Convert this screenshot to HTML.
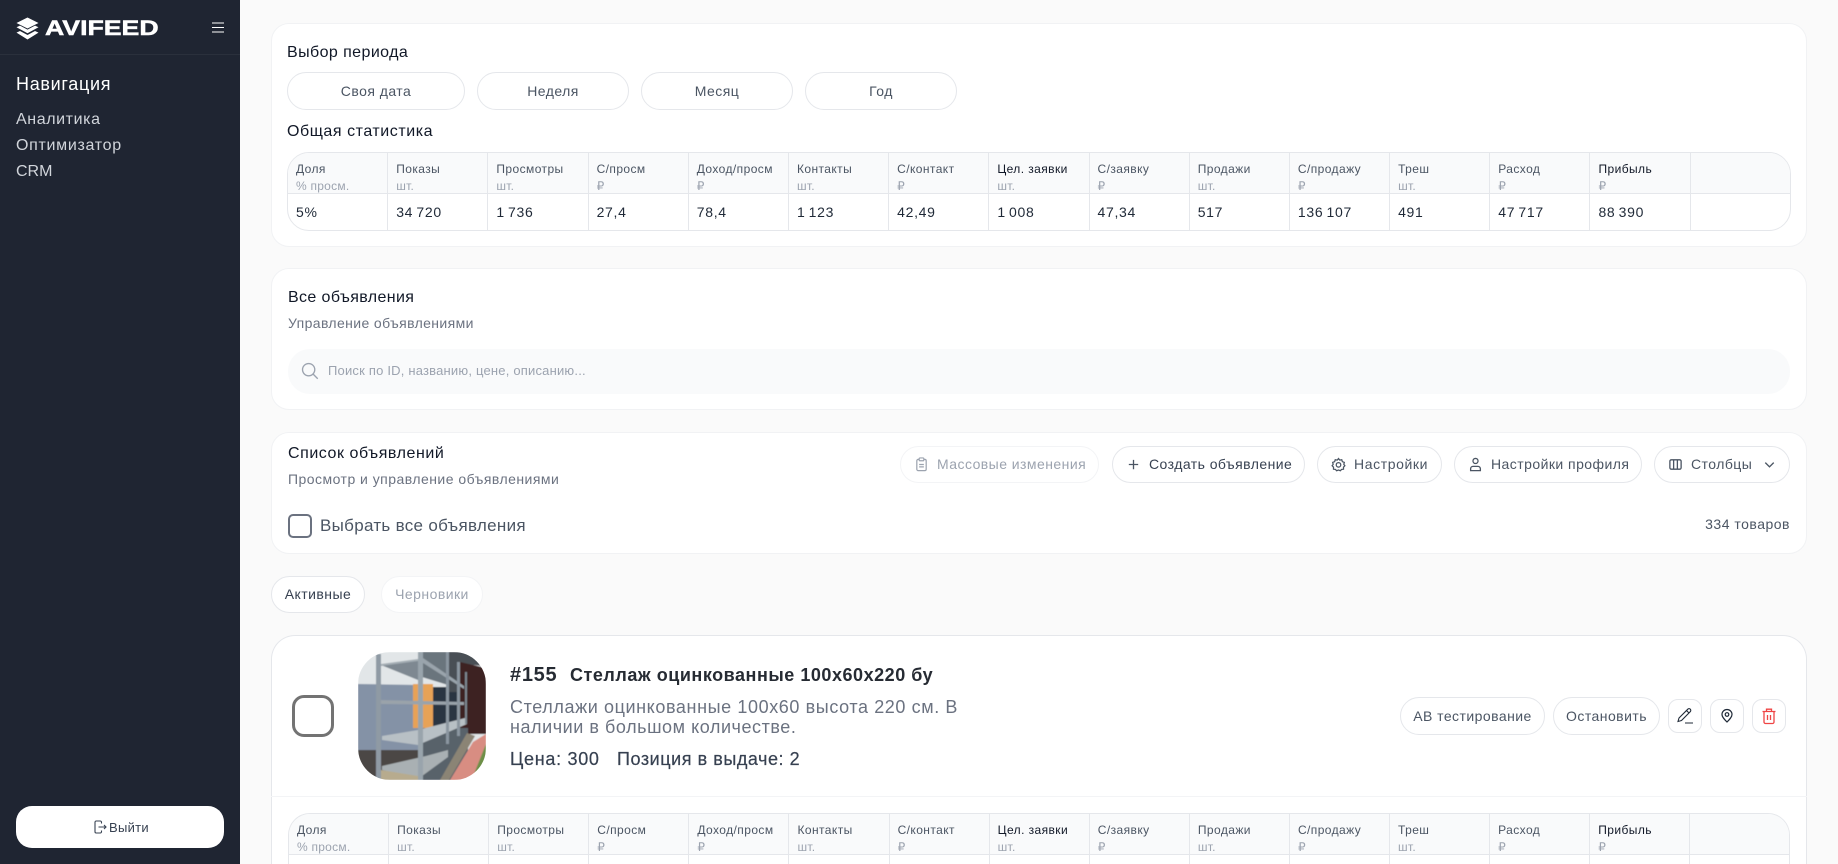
<!DOCTYPE html>
<html lang="ru"><head><meta charset="utf-8"><title>AVIFEED</title>
<style>
*{box-sizing:border-box}
html,body{margin:0;padding:0;width:1838px;height:864px;overflow:hidden;background:#fafafa;font-family:"Liberation Sans",sans-serif;color:#111827}
#w{position:relative;width:1838px;height:864px;overflow:hidden;background:#fafafa}
.a{position:absolute;white-space:nowrap}
.side{position:absolute;left:0;top:0;width:240px;height:864px;background:#1f2532}
.hr{position:absolute;left:0;top:54px;width:240px;height:1px;background:#2a303c}
.card{position:absolute;background:#fff;border:1px solid #f1f2f4;border-radius:18px}
.btn{position:absolute;height:38px;line-height:36px;border:1px solid #e5e7eb;border-radius:19px;background:#fff;color:#4b5563;font-size:14px;letter-spacing:.45px;text-align:center;white-space:nowrap}
.s{height:37px;line-height:35px}
.btn svg{position:absolute;top:10px}
.btn span{position:absolute;top:0;line-height:35px}
.ib{position:absolute;top:699px;width:34px;height:34px;border:1px solid #e5e7eb;border-radius:10px;background:#fff}
.ib svg{position:absolute;left:7px;top:7px}
.tb{position:absolute;border:1px solid #e5e7eb;border-radius:22px;overflow:hidden;background:#fff;display:grid;align-content:start}
.h{height:41px;background:#f9fafb;border-right:1px solid #e5e7eb;border-bottom:1px solid #e5e7eb;padding:8px 0 0 8px;font-size:12px;line-height:17px;color:#4b5563;letter-spacing:.42px;white-space:nowrap}
.h i{display:block;font-style:normal;color:#9ca3af;letter-spacing:.25px}
.h b{font-weight:400;color:#111827}
.v{height:37px;border-right:1px solid #e5e7eb;padding-left:8px;font-size:14px;line-height:36px;color:#1f2937;letter-spacing:.7px;word-spacing:-1.4px;white-space:nowrap}
.e{height:10px}
.last{border-right:0}
</style></head><body><div id="w">
<div class="side">
<svg class="a" style="left:16px;top:17px" width="23" height="23" viewBox="0 0 23 23"><path d="M11.5 0.5 22.5 6 11.5 11.5 .5 6Z" fill="#fff"/><path d="M.5 10.2 4 8.6 11.5 12.6 19 8.6 22.5 10.2 11.5 16.3Z" fill="#fff"/><path d="M.5 15.6 4 14 11.5 18 19 14 22.5 15.6 11.5 22.5Z" fill="#fff"/></svg>
<div class="a" style="left:45px;top:16px;font-size:21px;line-height:25px;font-weight:700;color:#fff;transform-origin:0 50%;transform:scaleX(1.27);-webkit-text-stroke:.5px #fff">AVIFEED</div>
<svg class="a" style="left:212px;top:22px" width="12" height="11" viewBox="0 0 12 11"><path d="M0 1H12M0 5.5H12M0 10H12" stroke="#fff" stroke-width="1"/></svg>
<div class="hr"></div>
<div class="a" style="left:16px;top:73px;font-size:18px;line-height:22px;color:#fff;letter-spacing:.7px">Навигация</div>
<div class="a" style="left:16px;top:109px;font-size:16px;line-height:22px;color:#d1d5db;letter-spacing:.6px">Аналитика</div>
<div class="a" style="left:16px;top:135px;font-size:16px;line-height:22px;color:#d1d5db;letter-spacing:.7px">Оптимизатор</div>
<div class="a" style="left:16px;top:161px;font-size:16px;line-height:22px;color:#d1d5db;letter-spacing:0">CRM</div>
<div class="a" style="left:16px;top:806px;width:208px;height:42px;background:#fff;border-radius:16px"></div>
<svg class="a" style="left:94px;top:820px" width="13" height="14" viewBox="0 0 13 14" fill="none" stroke="#374151" stroke-width="1.1"><path d="M7.5 3.5V2.2A1.2 1.2 0 0 0 6.3 1H2.2A1.2 1.2 0 0 0 1 2.2V11.8A1.2 1.2 0 0 0 2.2 13H6.3A1.2 1.2 0 0 0 7.5 11.8V10.5"/><path d="M4.5 7H12M10 5 12 7 10 9"/></svg>
<div class="a" style="left:109px;top:820px;font-size:13px;line-height:16px;color:#374151;letter-spacing:.3px">Выйти</div>
</div>

<div class="card" style="left:271px;top:23px;width:1536px;height:224px"></div>
<div class="a" style="left:287px;top:43px;font-size:16px;line-height:20px;color:#111827;letter-spacing:.42px">Выбор периода</div>
<div class="btn" style="left:287px;top:72px;width:178px">Своя дата</div>
<div class="btn" style="left:477px;top:72px;width:152px">Неделя</div>
<div class="btn" style="left:641px;top:72px;width:152px">Месяц</div>
<div class="btn" style="left:805px;top:72px;width:152px">Год</div>
<div class="a" style="left:287px;top:122px;font-size:16px;line-height:20px;color:#111827;letter-spacing:.55px">Общая статистика</div>

<div class="tb" style="left:287px;top:152px;height:79px;width:1504px;grid-template-columns:repeat(14,100.2px) 1fr">
<div class="h">Доля<i>% просм.</i></div><div class="h">Показы<i>шт.</i></div><div class="h">Просмотры<i>шт.</i></div><div class="h">С/просм<i>₽</i></div><div class="h">Доход/просм<i>₽</i></div><div class="h">Контакты<i>шт.</i></div><div class="h">С/контакт<i>₽</i></div><div class="h"><b>Цел. заявки</b><i>шт.</i></div><div class="h">С/заявку<i>₽</i></div><div class="h">Продажи<i>шт.</i></div><div class="h">С/продажу<i>₽</i></div><div class="h">Треш<i>шт.</i></div><div class="h">Расход<i>₽</i></div><div class="h"><b>Прибыль</b><i>₽</i></div><div class="h last"></div>
<div class="v">5%</div><div class="v">34 720</div><div class="v">1 736</div><div class="v">27,4</div><div class="v">78,4</div><div class="v">1 123</div><div class="v">42,49</div><div class="v">1 008</div><div class="v">47,34</div><div class="v">517</div><div class="v">136 107</div><div class="v">491</div><div class="v">47 717</div><div class="v">88 390</div><div class="v last"></div>
</div>

<div class="card" style="left:271px;top:268px;width:1536px;height:142px"></div>
<div class="a" style="left:288px;top:288px;font-size:16px;line-height:20px;color:#111827;letter-spacing:.38px">Все объявления</div>
<div class="a" style="left:288px;top:314px;font-size:14px;line-height:18px;color:#6b7280;letter-spacing:.38px">Управление объявлениями</div>
<div class="a" style="left:288px;top:349px;width:1502px;height:45px;background:#f9fafb;border-radius:22px"></div>
<svg class="a" style="left:301px;top:362px" width="18" height="18" viewBox="0 0 20 20" fill="none" stroke="#9ca3af" stroke-width="1.5"><circle cx="8.5" cy="8.5" r="6.8"/><path d="M13.5 13.5 18.6 18.6"/></svg>
<div class="a" style="left:328px;top:362px;font-size:13px;line-height:18px;color:#9ca3af;letter-spacing:.2px">Поиск по ID, названию, цене, описанию...</div>

<div class="card" style="left:271px;top:432px;width:1536px;height:122px"></div>
<div class="a" style="left:288px;top:444px;font-size:16px;line-height:20px;color:#111827;letter-spacing:.55px">Список объявлений</div>
<div class="a" style="left:288px;top:470px;font-size:14px;line-height:18px;color:#6b7280;letter-spacing:.47px">Просмотр и управление объявлениями</div>
<div class="a" style="left:288px;top:514px;width:24px;height:24px;border:2px solid #6b7280;border-radius:5px;background:#fff"></div>
<div class="a" style="left:320px;top:516px;font-size:17px;line-height:20px;color:#4b5563;letter-spacing:.3px">Выбрать все объявления</div>

<div class="btn s" style="left:900px;top:446px;width:199px;border-color:#f3f4f6;color:#9ca3af"><svg style="left:13px" width="15" height="15" viewBox="0 0 16 16" fill="none" stroke="#9ca3af" stroke-width="1.3"><rect x="3" y="2.5" width="10" height="12" rx="1.5"/><rect x="5.5" y="1" width="5" height="3" rx="1" fill="#fff"/><path d="M5.5 8H10.5M5.5 10.5H10.5"/></svg><span style="left:36px">Массовые изменения</span></div>
<div class="btn s" style="left:1112px;top:446px;width:193px;color:#374151"><svg style="left:13px" width="15" height="15" viewBox="0 0 16 16" fill="none" stroke="#4b5563" stroke-width="1.4"><path d="M8 3V13M3 8H13"/></svg><span style="left:36px">Создать объявление</span></div>
<div class="btn s" style="left:1317px;top:446px;width:125px"><svg style="left:13px" width="15" height="15" viewBox="0 0 24 24" fill="none" stroke="#4b5563" stroke-width="2"><path d="M12 2.5 14 5 17.2 4.4 18.2 7.5 21.3 8.6 20.5 11.8 22.2 14 20 16.2 20 19.5 16.8 19.9 15 22 12 20.8 9 22 7.2 19.9 4 19.5 4 16.2 1.8 14 3.5 11.8 2.7 8.6 5.8 7.5 6.8 4.4 10 5Z"/><circle cx="12" cy="12.5" r="3.6"/></svg><span style="left:36px;letter-spacing:.6px">Настройки</span></div>
<div class="btn s" style="left:1454px;top:446px;width:188px"><svg style="left:13px" width="15" height="15" viewBox="0 0 16 16" fill="none" stroke="#4b5563" stroke-width="1.4"><circle cx="8" cy="4.2" r="2.7"/><path d="M2.8 14.5V12.5A2.5 2.5 0 0 1 5.3 10H10.7A2.5 2.5 0 0 1 13.2 12.5V14.5Z"/></svg><span style="left:36px">Настройки профиля</span></div>
<div class="btn s" style="left:1654px;top:446px;width:136px"><svg style="left:13px" width="15" height="15" viewBox="0 0 16 16" fill="none" stroke="#4b5563" stroke-width="1.4"><rect x="2" y="3" width="12" height="10" rx="1.5"/><path d="M6 3V13M10 3V13"/></svg><span style="left:36px">Столбцы</span><svg style="left:107px" width="15" height="15" viewBox="0 0 16 16" fill="none" stroke="#4b5563" stroke-width="1.4"><path d="M3.5 6 8 10.5 12.5 6"/></svg></div>
<div class="a" style="right:48px;top:515px;font-size:14px;line-height:18px;color:#4b5563;letter-spacing:.5px">334 товаров</div>

<div class="btn s" style="left:271px;top:576px;width:94px;color:#374151">Активные</div>
<div class="btn s" style="left:381px;top:576px;width:102px;border-color:#f3f4f6;color:#9ca3af">Черновики</div>

<div class="a" style="left:271px;top:635px;width:1536px;height:229px;background:#fff;border:1px solid #e5e7eb;border-bottom:0;border-radius:24px 24px 0 0"></div>
<div class="a" style="left:292px;top:695px;width:42px;height:42px;border:3px solid #737373;border-radius:12px;background:#fff"></div>
<svg class="a" style="left:358px;top:652px" width="128" height="128" viewBox="0 0 128 128">
<defs><clipPath id="c"><rect width="128" height="128" rx="32"/></clipPath><filter id="f"><feGaussianBlur stdDeviation=".6"/></filter></defs>
<g clip-path="url(#c)"><g filter="url(#f)">
<rect width="128" height="128" fill="#e2e6e8"/>
<path d="M0 32 60 33V100L0 100Z" fill="#8492a6"/>
<path d="M0 98H60V128H0Z" fill="#4b4644"/>
<path d="M23 13 60 8V28Z" fill="#7e8891"/>
<path d="M55 32H75V76H55Z" fill="#e7a256"/>
<path d="M64 0H90V33L64 25Z" fill="#6b757d"/>
<path d="M75 35H102V78H75Z" fill="#2c3443"/>
<path d="M88 0H128V14L102 12V40H88Z" fill="#4a4f55"/>
<path d="M102 10 128 16V82H102Z" fill="#3e2422"/>
<path d="M60 76H110V128H60Z" fill="#59626a"/>
<path d="M24 88 60 93 109 72 107 66 60 78 24 84Z" fill="#b8c0c5"/>
<path d="M24 118 60 127 90 105 90 98 68 104 24 114Z" fill="#a9b0b3"/>
<path d="M92 128 115 90 128 82V128Z" fill="#d88d82"/>
<path d="M82 128H91L117 84 109 81Z" fill="#8b8474"/>
<path d="M116 122 128 92V122Z" fill="#6d8f47"/>
<path d="M22 48 106 50V53L22 52Z" fill="#9aa3aa"/>
<path d="M23 12 60 7V9L23 14Z" fill="#a4adb4"/>
<path d="M65 6 106 34V37L65 11Z" fill="#9aa4ac"/>
<rect x="18" y="2" width="5" height="126" fill="#8f9aa4"/>
<rect x="60" y="0" width="5" height="128" fill="#99a4ac"/>
<rect x="88" y="0" width="3" height="92" fill="#8b96a0"/>
<rect x="99" y="10" width="3" height="74" fill="#8b96a0"/>
<rect x="107" y="20" width="2" height="52" fill="#7d8890"/>
<path d="M23 118 60 124V128H23Z" fill="#b7ab8e"/>
</g></g></svg>
<div class="a" style="left:510px;top:663px;font-size:20px;line-height:24px;font-weight:700;color:#262b33;letter-spacing:.7px">#155</div>
<div class="a" style="left:570px;top:664px;font-size:18px;line-height:22px;font-weight:700;color:#262b33;letter-spacing:.53px">Стеллаж оцинкованные 100x60x220 бу</div>
<div class="a" style="left:510px;top:697px;font-size:18px;line-height:20px;color:#6b7280;letter-spacing:.6px">Стеллажи оцинкованные 100х60 высота 220 см. В</div>
<div class="a" style="left:510px;top:717px;font-size:18px;line-height:20px;color:#6b7280;letter-spacing:.55px">наличии в большом количестве.</div>
<div class="a" style="left:510px;top:748px;font-size:18px;line-height:22px;color:#374151;letter-spacing:.7px;-webkit-text-stroke:.2px #374151">Цена: 300</div>
<div class="a" style="left:617px;top:748px;font-size:18px;line-height:22px;color:#374151;letter-spacing:.55px;-webkit-text-stroke:.2px #374151">Позиция в выдаче: 2</div>

<div class="btn" style="left:1400px;top:697px;width:145px">АВ тестирование</div>
<div class="btn" style="left:1553px;top:697px;width:107px">Остановить</div>
<div class="ib" style="left:1668px"><svg width="18" height="18" viewBox="0 0 18 18" fill="none" stroke="#1f2937" stroke-width="1.1"><path d="M2 14.5 3 11 11.8 2.2A1.6 1.6 0 0 1 14.3 4.6L5.5 13.5Z"/><path d="M10.5 3.5 13 6M9 16H17"/></svg></div>
<div class="ib" style="left:1710px"><svg width="18" height="18" viewBox="0 0 18 18" fill="none" stroke="#1f2937" stroke-width="1.2"><path d="M9 15C6.5 12.5 4 10 4 7.5A5 5 0 0 1 14 7.5C14 10 11.5 12.5 9 15Z"/><circle cx="9" cy="7.5" r="1.8"/></svg></div>
<div class="ib" style="left:1752px"><svg width="18" height="18" viewBox="0 0 18 18" fill="none" stroke="#ef4444" stroke-width="1.3"><path d="M2.5 4.5H15.5M6.5 4.5V2.2H11.5V4.5M4 4.5V15A1.5 1.5 0 0 0 5.5 16.5H12.5A1.5 1.5 0 0 0 14 15V4.5M7.5 8V13M10.5 8V13"/></svg></div>
<div class="a" style="left:271px;top:796px;width:1536px;height:1px;background:#f3f4f6"></div>

<div class="tb" style="left:288px;top:813px;height:51px;width:1502px;border-bottom:0;border-radius:22px 22px 0 0;grid-template-columns:repeat(14,100.1px) 1fr">
<div class="h">Доля<i>% просм.</i></div><div class="h">Показы<i>шт.</i></div><div class="h">Просмотры<i>шт.</i></div><div class="h">С/просм<i>₽</i></div><div class="h">Доход/просм<i>₽</i></div><div class="h">Контакты<i>шт.</i></div><div class="h">С/контакт<i>₽</i></div><div class="h"><b>Цел. заявки</b><i>шт.</i></div><div class="h">С/заявку<i>₽</i></div><div class="h">Продажи<i>шт.</i></div><div class="h">С/продажу<i>₽</i></div><div class="h">Треш<i>шт.</i></div><div class="h">Расход<i>₽</i></div><div class="h"><b>Прибыль</b><i>₽</i></div><div class="h last"></div>
<div class="v e"></div><div class="v e"></div><div class="v e"></div><div class="v e"></div><div class="v e"></div><div class="v e"></div><div class="v e"></div><div class="v e"></div><div class="v e"></div><div class="v e"></div><div class="v e"></div><div class="v e"></div><div class="v e"></div><div class="v e"></div><div class="v e last"></div>
</div>
</div></body></html>
